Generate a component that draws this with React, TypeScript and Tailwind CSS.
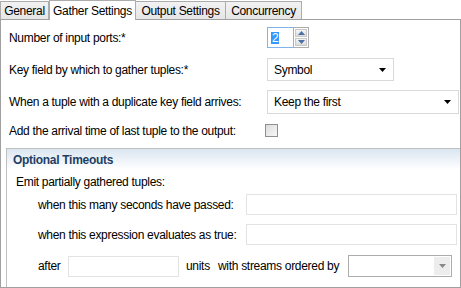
import { useState } from 'react'

const tabs = ['General', 'Gather Settings', 'Output Settings', 'Concurrency']
const tabWidths = ['w-[49px]', 'w-[87px]', 'w-[91px]', 'w-[77px]']

function Combo({ value, className }: { value: string; className: string }) {
  return (
    <div
      className={`flex items-center justify-between border border-[#d9d9d9] bg-white pl-[6px] pr-[7px] ${className}`}
    >
      <span>{value}</span>
      <svg width="7" height="4" viewBox="0 0 7 4">
        <path d="M0 0h7L3.5 4z" fill="#000" />
      </svg>
    </div>
  )
}

function TextBox({ className }: { className: string }) {
  return <div className={`border border-[#e3e3e3] bg-white ${className}`} />
}

export default function App() {
  const [active] = useState(1)

  return (
    <div className="w-[461px] h-[288px] bg-white text-[12px] text-black font-['Liberation_Sans',sans-serif] tracking-[-0.3px] leading-none overflow-hidden">
      <div className="flex h-[19px] items-end">
        {tabs.map((t, i) => (
          <div
            key={t}
            className={`${tabWidths[i]} flex items-center justify-center border border-b-0 border-[#acacac] ${
              i === active
                ? 'h-[20px] bg-white relative z-10 -mb-px'
                : 'h-[18px] bg-gradient-to-b from-[#f2f2f2] to-[#e6e6e6] -ml-px first:ml-0'
            }`}
          >
            {t}
          </div>
        ))}
      </div>

      <div className="h-[269px] border border-[#a0a0a0] flex flex-col">
        <div className="grid grid-cols-[258px_1fr] items-center pl-[8px] pt-[7px]">
          <span>Number of input ports:*</span>
          <div className="flex h-[21px]">
            <div className="w-[26px] border border-[#7eb4ea] border-r-0 flex items-center pl-[3px]">
              <span className="bg-[#3399ff] text-white px-px">2</span>
            </div>
            <div className="w-[16px] border border-[#acacac] flex flex-col p-px gap-px">
              <div className="flex-1 bg-gradient-to-b from-[#f4f4f4] to-[#dcdcdc] border border-[#c8c8c8] flex items-center justify-center">
                <svg width="7" height="4" viewBox="0 0 7 4">
                  <path d="M0 4h7L3.5 0z" fill="#4a6fa5" />
                </svg>
              </div>
              <div className="flex-1 bg-gradient-to-b from-[#f4f4f4] to-[#dcdcdc] border border-[#c8c8c8] flex items-center justify-center">
                <svg width="7" height="4" viewBox="0 0 7 4">
                  <path d="M0 0h7L3.5 4z" fill="#4a6fa5" />
                </svg>
              </div>
            </div>
          </div>

          <span className="mt-[10px]">Key field by which to gather tuples:*</span>
          <Combo value="Symbol" className="mt-[10px] w-[127px] h-[23px]" />

          <span className="mt-[9px]">When a tuple with a duplicate key field arrives:</span>
          <Combo value="Keep the first" className="mt-[9px] mr-[1px] h-[24px]" />

          <span className="mt-[10px]">Add the arrival time of last tuple to the output:</span>
          <div className="mt-[10px] ml-[-2px] w-[13px] h-[13px] border border-[#8f8f8f] bg-gradient-to-br from-[#dcdcdc] to-[#f8f8f8]" />
        </div>

        <div className="ml-[5px] mt-[11px] flex-1 border-t border-l border-[#c0c0c0] flex flex-col">
          <div className="h-[21px] bg-gradient-to-b from-[#dbe6f1] to-white flex items-center pl-[6px] font-bold text-[#1f3e64]">
            Optional Timeouts
          </div>
          <div className="pl-[9px] pt-[6px]">Emit partially gathered tuples:</div>
          <div className="grid grid-cols-[208px_211px] items-center pl-[31px] gap-y-[9px] mt-[6px]">
            <span>when this many seconds have passed:</span>
            <TextBox className="h-[21px]" />
            <span>when this expression evaluates as true:</span>
            <TextBox className="h-[21px]" />
          </div>
          <div className="flex items-center pl-[31px] mt-[10px]">
            <span className="w-[30px]">after</span>
            <TextBox className="w-[111px] h-[21px]" />
            <span className="ml-[7px] w-[32px]">units</span>
            <span>with streams ordered by</span>
            <div className="ml-[9px] w-[104px] h-[22px] border border-[#acacac] bg-white flex justify-end p-px">
              <div className="w-[16px] bg-[#ededed] flex items-center justify-center">
                <svg width="7" height="4" viewBox="0 0 7 4">
                  <path d="M0 0h7L3.5 4z" fill="#888" />
                </svg>
              </div>
            </div>
          </div>
        </div>
      </div>
    </div>
  )
}
